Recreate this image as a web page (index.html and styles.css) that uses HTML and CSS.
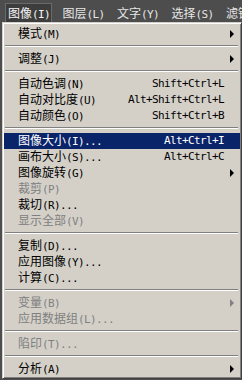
FILE: index.html
```html
<!DOCTYPE html>
<html lang="zh-CN">
<head>
<meta charset="utf-8">
<link rel="stylesheet" href="styles.css">
</head>
<body>
<div class="bar">
  <span class="bi active">图像<span class="bk">(I)</span></span>
  <span class="bi">图层<span class="bk">(L)</span></span>
  <span class="bi">文字<span class="bk">(Y)</span></span>
  <span class="bi">选择<span class="bk">(S)</span></span>
  <span class="bi">滤镜</span>
</div>
<div class="menu">
  <div class="item"><span class="label">模式<span class="k">(M)</span></span><span class="arrow"></span></div>
  <div class="sep"></div>
  <div class="item"><span class="label">调整<span class="k">(J)</span></span><span class="arrow"></span></div>
  <div class="sep"></div>
  <div class="item"><span class="label">自动色调<span class="k">(N)</span></span><span class="sc">Shift+Ctrl+L</span></div>
  <div class="item"><span class="label">自动对比度<span class="k">(U)</span></span><span class="sc">Alt+Shift+Ctrl+L</span></div>
  <div class="item"><span class="label">自动颜色<span class="k">(O)</span></span><span class="sc">Shift+Ctrl+B</span></div>
  <div class="sep"></div>
  <div class="item sel"><span class="label">图像大小<span class="k">(I)...</span></span><span class="sc">Alt+Ctrl+I</span></div>
  <div class="item"><span class="label">画布大小<span class="k">(S)...</span></span><span class="sc">Alt+Ctrl+C</span></div>
  <div class="item"><span class="label">图像旋转<span class="k">(G)</span></span><span class="arrow"></span></div>
  <div class="item dis"><span class="label">裁剪<span class="k">(P)</span></span></div>
  <div class="item"><span class="label">裁切<span class="k">(R)...</span></span></div>
  <div class="item dis"><span class="label">显示全部<span class="k">(V)</span></span></div>
  <div class="sep"></div>
  <div class="item"><span class="label">复制<span class="k">(D)...</span></span></div>
  <div class="item"><span class="label">应用图像<span class="k">(Y)...</span></span></div>
  <div class="item"><span class="label">计算<span class="k">(C)...</span></span></div>
  <div class="sep"></div>
  <div class="item dis"><span class="label">变量<span class="k">(B)</span></span><span class="arrow"></span></div>
  <div class="item dis"><span class="label">应用数据组<span class="k">(L)...</span></span></div>
  <div class="sep"></div>
  <div class="item dis"><span class="label">陷印<span class="k">(T)...</span></span></div>
  <div class="sep"></div>
  <div class="item"><span class="label">分析<span class="k">(A)</span></span><span class="arrow"></span></div>
</div>
</body>
</html>
```

FILE: styles.css
```css
html, body {
  margin: 0;
  padding: 0;
  background: #4d4d4d;
  overflow: hidden;
}
body {
  width: 242px;
  height: 380px;
  font-family: "Noto Sans CJK SC", "DejaVu Sans", sans-serif;
  font-size: 12px;
}
.bar {
  height: 22px;
  display: flex;
  align-items: flex-end;
  padding-left: 5px;
  gap: 7.5px;
  white-space: nowrap;
  overflow: hidden;
}
.bi {
  flex: 0 0 47px;
  width: 47px;
  height: 19px;
  line-height: 18px;
  padding: 0 2px 0 2px;
  color: #e6e6e6;
  box-sizing: border-box;
  border: 1px solid transparent;
  border-bottom: none;
  overflow: hidden;
}
.bi.active {
  background: #3d3d3d;
  border-color: #6a6a6a;
  color: #f4f4f4;
}
.bk {
  font-family: "DejaVu Sans Mono", monospace;
  font-size: 11px;
  letter-spacing: -0.62px;
}
.menu {
  margin-left: 2px;
  width: 240px;
  box-sizing: border-box;
  background: #d4d0c8;
  border: 1px solid;
  border-color: #d4d0c8 #404040 #404040 #d4d0c8;
  box-shadow: inset 1px 1px #ffffff, inset -1px -1px #808080;
  padding: 3px 1px 1px 1px;
}
.item {
  height: 16px;
  line-height: 16px;
  display: flex;
  align-items: center;
  padding: 0 6px 0 14px;
  color: #000;
  white-space: nowrap;
}
.label {
  flex: 1;
}
.k, .sc {
  font-family: "DejaVu Sans Mono", monospace;
  font-size: 11px;
  letter-spacing: -0.62px;
}
.sc {
  margin-right: 10px;
}
.arrow {
  width: 0;
  height: 0;
  border-left: 4px solid #000;
  border-top: 4px solid transparent;
  border-bottom: 4px solid transparent;
}
.item.sel {
  background: #0a246a;
  color: #fff;
}
.item.dis {
  color: #808080;
}
.item.dis .arrow {
  border-left-color: #808080;
}
.sep {
  height: 9px;
  box-sizing: border-box;
  padding-top: 3px;
  margin: 0 2px 0 1px;
}
.sep::before {
  content: "";
  display: block;
  border-top: 1px solid #808080;
  border-bottom: 1px solid #ffffff;
}
```
